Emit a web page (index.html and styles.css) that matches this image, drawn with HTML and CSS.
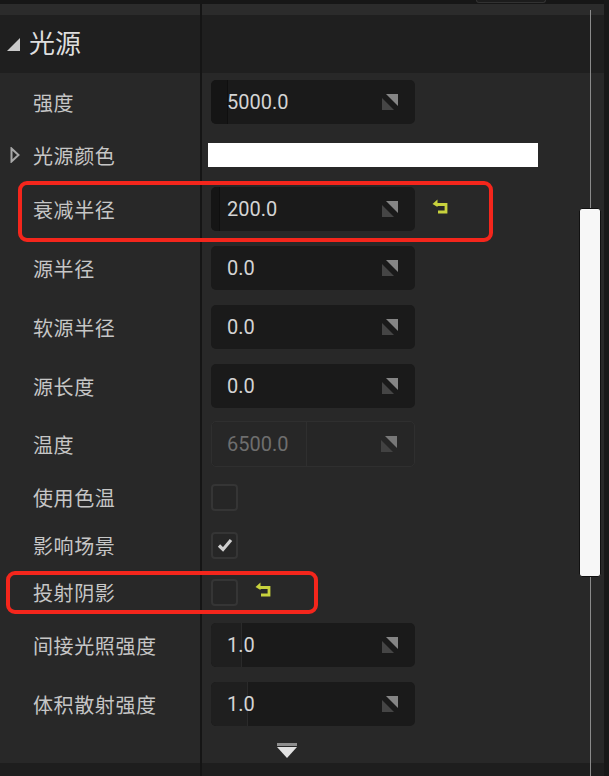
FILE: index.html
```html
<!DOCTYPE html>
<html>
<head>
<meta charset="utf-8"/>
<title>细节 - 光源</title>
<link rel="stylesheet" href="styles.css">
</head>
<body>
<div class="window">
    <div class="topbar"><span class="tab"></span></div>
    <div class="row band"><div class="name"></div><div class="value"></div></div>

    <div class="row section">
        <div class="name">
            <svg class="caret-open" width="13" height="13" viewBox="0 0 13 13"><polygon points="13,0 13,13 0,13" fill="#c9c9c9"/></svg>光源
        </div>
        <div class="value"></div>
    </div>

    <div class="row h58">
        <div class="name">强度</div>
        <div class="value">
            <div class="spin"><span class="fill dark" style="width:16px"></span><span class="num">5000.0</span>
                <svg class="drag" width="16" height="16" viewBox="0 0 16 16"><polygon points="0,4 0,16 12,16" fill="#454545"/><polygon points="4,0 16,0 16,12" fill="#858585"/></svg></div>
        </div>
    </div>

    <div class="row h48">
        <div class="name"><svg class="caret-closed" width="10" height="16" viewBox="0 0 10 16"><polygon points="1.5,1.5 8.5,8 1.5,14.5" fill="none" stroke="#a9a9a9" stroke-width="2"/></svg>光源颜色</div>
        <div class="value"><span class="swatch"></span></div>
    </div>

    <div class="row h60">
        <div class="name">衰减半径</div>
        <div class="value">
            <div class="spin"><span class="fill dark" style="width:8px"></span><span class="num">200.0</span>
                <svg class="drag" width="16" height="16" viewBox="0 0 16 16"><polygon points="0,4 0,16 12,16" fill="#454545"/><polygon points="4,0 16,0 16,12" fill="#858585"/></svg></div>
            <svg class="reset" width="17" height="16" viewBox="0 0 17 16"><path d="M4 5.5 H14 V13 H6" fill="none" stroke="#c8d23d" stroke-width="2.8"/><polygon points="0.5,5 5.5,0.5 5.5,8" fill="#c8d23d"/></svg>
        </div>
    </div>

    <div class="row h58">
        <div class="name">源半径</div>
        <div class="value">
            <div class="spin"><span class="num">0.0</span>
                <svg class="drag" width="16" height="16" viewBox="0 0 16 16"><polygon points="0,4 0,16 12,16" fill="#454545"/><polygon points="4,0 16,0 16,12" fill="#858585"/></svg></div>
        </div>
    </div>

    <div class="row h60">
        <div class="name">软源半径</div>
        <div class="value">
            <div class="spin"><span class="num">0.0</span>
                <svg class="drag" width="16" height="16" viewBox="0 0 16 16"><polygon points="0,4 0,16 12,16" fill="#454545"/><polygon points="4,0 16,0 16,12" fill="#858585"/></svg></div>
        </div>
    </div>

    <div class="row h58">
        <div class="name">源长度</div>
        <div class="value">
            <div class="spin"><span class="num">0.0</span>
                <svg class="drag" width="16" height="16" viewBox="0 0 16 16"><polygon points="0,4 0,16 12,16" fill="#454545"/><polygon points="4,0 16,0 16,12" fill="#858585"/></svg></div>
        </div>
    </div>

    <div class="row h58">
        <div class="name">温度</div>
        <div class="value">
            <div class="spin disabled"><span class="fill" style="width:94px"></span><span class="num">6500.0</span>
                <svg class="drag" width="16" height="16" viewBox="0 0 16 16"><polygon points="0,4 0,16 12,16" fill="#424242"/><polygon points="4,0 16,0 16,12" fill="#777777"/></svg></div>
        </div>
    </div>

    <div class="row h48">
        <div class="name">使用色温</div>
        <div class="value"><span class="check"></span></div>
    </div>

    <div class="row h48">
        <div class="name">影响场景</div>
        <div class="value"><span class="check"><svg width="22" height="22" viewBox="0 0 22 22"><path d="M5 11.5 L9 15.5 L17 6" fill="none" stroke="#cfcfcf" stroke-width="3.2"/></svg></span></div>
    </div>

    <div class="row h46">
        <div class="name">投射阴影</div>
        <div class="value">
            <span class="check"></span>
            <svg class="reset near" width="17" height="16" viewBox="0 0 17 16"><path d="M4 5.5 H14 V13 H6" fill="none" stroke="#c8d23d" stroke-width="2.8"/><polygon points="0.5,5 5.5,0.5 5.5,8" fill="#c8d23d"/></svg>
        </div>
    </div>

    <div class="row h60">
        <div class="name">间接光照强度</div>
        <div class="value">
            <div class="spin"><span class="fill" style="width:30px"></span><span class="num">1.0</span>
                <svg class="drag" width="16" height="16" viewBox="0 0 16 16"><polygon points="0,4 0,16 12,16" fill="#454545"/><polygon points="4,0 16,0 16,12" fill="#858585"/></svg></div>
        </div>
    </div>

    <div class="row h58">
        <div class="name">体积散射强度</div>
        <div class="value">
            <div class="spin"><span class="fill" style="width:36px"></span><span class="num">1.0</span>
                <svg class="drag" width="16" height="16" viewBox="0 0 16 16"><polygon points="0,4 0,16 12,16" fill="#454545"/><polygon points="4,0 16,0 16,12" fill="#858585"/></svg></div>
        </div>
    </div>

    <div class="row more">
        <div class="name"></div>
        <div class="value"><span class="expand-down"><svg width="20" height="15" viewBox="0 0 20 15"><rect x="0" y="0" width="20" height="3" fill="#8e8e8e"/><polygon points="0,4 20,4 10,15" fill="#e2e2e2"/></svg></span></div>
    </div>
    <div class="row foot"><div class="name"></div><div class="value"></div></div>

    <!-- overlay scrollbar -->
    <div class="scrollbar"><span class="thumb"></span></div>

    <!-- red annotation boxes -->
    <div class="mark mark-1"></div>
    <div class="mark mark-2"></div>
</div>
</body>
</html>
```

FILE: styles.css
```css
html, body {
    margin: 0;
    padding: 0;
}

body {
    background: #181818;
    font-family: "Noto Sans CJK SC", "Noto Sans", sans-serif;
    color: #c6c6c6;
}

.window {
    position: relative;
    width: 604px;
    height: 776px;
    background: #282828;
    overflow: hidden;
}

.topbar {
    height: 4px;
    background: #161616;
}
.topbar .tab {
    display: block;
    width: 68px;
    height: 2px;
    margin-left: 476px;
    border: 1px solid #323232;
    border-top: none;
    border-radius: 0 0 6px 6px;
    background: #1c1c1c;
}

.row {
    display: flex;
}
.row .name {
    box-sizing: border-box;
    width: 202px;
    flex: none;
    border-right: 2px solid #151515;
    padding-left: 33px;
    display: flex;
    align-items: center;
    font-size: 20px;
    letter-spacing: 0.6px;
    white-space: nowrap;
}
.row .value {
    flex: 1;
    display: flex;
    align-items: center;
    padding-left: 9px;
}

.band {
    height: 11px;
    background: #2b2b2b;
}

.section {
    height: 58px;
    background: #1f1f1f;
}
.section .name {
    padding-left: 7px;
    padding-bottom: 6px;
    font-size: 26px;
    letter-spacing: 0;
    color: #dedede;
}
.caret-open {
    margin-right: 9px;
    margin-top: 6px;
}
.caret-closed {
    margin-left: -23px;
    margin-right: 13px;
}

.h46 { height: 46px; }
.h48 { height: 48px; }
.h58 { height: 58px; }
.h60 { height: 60px; }

.spin {
    position: relative;
    box-sizing: border-box;
    width: 204px;
    height: 44px;
    border-radius: 5px;
    background: #1a1a1a;
    display: flex;
    align-items: center;
    padding: 0 17px 0 16px;
    overflow: hidden;
}
.spin .fill {
    position: absolute;
    left: 0;
    top: 0;
    bottom: 0;
    background: #1f1f1f;
    border-right: 1px solid #2a2a2a;
    border-radius: 5px 0 0 5px;
}
.spin .fill.dark {
    background: #151515;
    border-right: 1px solid #0f0f0f;
}
.spin .num {
    position: relative;
    flex: 1;
    font-family: Roboto, "Liberation Sans", sans-serif;
    font-size: 20px;
    color: #d4d4d4;
}
.spin .drag {
    position: relative;
}
.spin.disabled {
    height: 46px;
    background: #262626;
    border: 1px solid #2f2f2f;
    padding-left: 15px;
}
.spin.disabled .fill {
    background: #272727;
    border-right: 1px solid #2f2f2f;
}
.spin.disabled .num {
    color: #6e6e6e;
}

.reset {
    margin-left: 17px;
    margin-top: -4px;
}
.reset.near {
    margin-left: 17px;
}

.swatch {
    display: block;
    width: 330px;
    height: 24px;
    margin-left: -3px;
    background: #ffffff;
}

.check {
    box-sizing: border-box;
    width: 27px;
    height: 27px;
    border: 2px solid #353535;
    border-radius: 4px;
    background: #262626;
    display: flex;
    align-items: center;
    justify-content: center;
}

.more {
    height: 30px;
}
.more .value {
    padding-left: 75px;
    align-items: flex-start;
    padding-top: 10px;
}
.expand-down svg {
    display: block;
}

.foot {
    height: 13px;
    background: #1e1e1e;
}

.scrollbar {
    position: absolute;
    left: 579px;
    top: 10px;
    bottom: 0;
    width: 23px;
    background: linear-gradient(90deg, transparent 11px, #8a8a8a 11px, #8a8a8a 12px, transparent 12px);
}
.scrollbar .thumb {
    position: absolute;
    left: 0;
    top: 198px;
    box-sizing: border-box;
    width: 22px;
    height: 369px;
    background: #f7f7f7;
    border: 1px solid #111111;
    border-radius: 3px;
}

.mark {
    position: absolute;
    box-sizing: border-box;
    border: 4px solid #f4261c;
    border-radius: 9px;
}
.mark-1 {
    left: 18px;
    top: 181px;
    width: 475px;
    height: 61px;
}
.mark-2 {
    left: 6px;
    top: 571px;
    width: 312px;
    height: 43px;
}
```
